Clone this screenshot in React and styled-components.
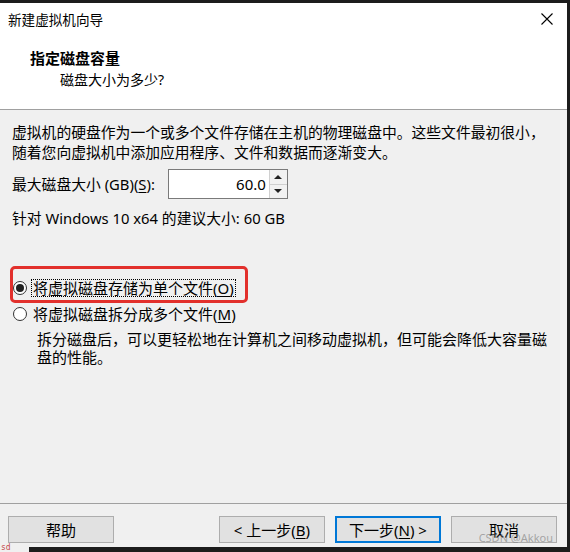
import React from 'react';
import styled, { createGlobalStyle } from 'styled-components';

const GlobalStyle = createGlobalStyle`
  html, body {
    margin: 0;
    padding: 0;
    background: #1c1c1c;
  }
`;

const Frame = styled.div`
  width: 570px;
  height: 552px;
  box-sizing: border-box;
  padding: 3px 3px 0 0;
  background: #1c1c1c;
  display: flex;
  flex-direction: column;
  font-family: "Noto Sans", "Noto Sans CJK SC", sans-serif;
  color: #000;
`;

const Window = styled.div`
  flex: 1;
  position: relative;
  display: flex;
  flex-direction: column;
  background: #f0f0f0;
`;

const TitleBar = styled.div`
  height: 32px;
  background: #fff;
  display: flex;
  align-items: center;
  justify-content: space-between;
  padding: 0 14px 0 8px;
  font-size: 13.6px;
`;

const Header = styled.div`
  height: 75px;
  box-sizing: border-box;
  background: #fff;
  border-bottom: 1px solid #a0a0a0;
  padding: 13px 0 0 30px;
`;

const HeaderTitle = styled.div`
  font-size: 15px;
  font-weight: bold;
  line-height: 20px;
`;

const HeaderSub = styled.div`
  font-size: 14px;
  line-height: 20px;
  margin-top: 2px;
  padding-left: 30px;
`;

const Body = styled.div`
  flex: 1;
  padding: 12px 12px 0 12px;
  font-size: 14.8px;
  line-height: 20px;
`;

const Text = styled.p`
  margin: ${p => p.$top || 0}px 0 0 0;
`;

const Key = styled.span`
  text-decoration: underline;
  text-underline-offset: 2px;
`;

const SizeRow = styled.div`
  display: flex;
  align-items: center;
  gap: 13px;
  margin-top: 7px;
`;

const SpinBox = styled.div`
  width: 120px;
  height: 30px;
  box-sizing: border-box;
  border: 1px solid #7a7a7a;
  background: #fff;
  display: flex;
`;

const SpinValue = styled.div`
  flex: 1;
  text-align: right;
  padding-right: 3px;
  line-height: 28px;
  font-size: 15px;
`;

const SpinButtons = styled.div`
  width: 17px;
  display: flex;
  flex-direction: column;
  border-left: 1px solid #d0d0d0;
`;

const SpinButton = styled.div`
  flex: 1;
  display: flex;
  align-items: center;
  justify-content: center;
  background: #f2f2f2;
  border-top: ${p => (p.$down ? '1px solid #d0d0d0' : 'none')};
`;

const Arrow = styled.span`
  width: 0;
  height: 0;
  border-left: 4px solid transparent;
  border-right: 4px solid transparent;
  ${p => (p.$down ? 'border-top: 4px solid #222;' : 'border-bottom: 4px solid #222;')}
`;

const Options = styled.div`
  display: flex;
  flex-direction: column;
  gap: 6px;
  margin-top: 50px;
`;

const OptionRow = styled.div`
  position: relative;
  display: flex;
  align-items: center;
  gap: 4px;
  height: 20px;
`;

const Radio = styled.span`
  width: 14px;
  height: 14px;
  box-sizing: border-box;
  margin-left: 1px;
  border-radius: 50%;
  border: 1px solid #333;
  background: #fff;
  display: flex;
  align-items: center;
  justify-content: center;

  &::after {
    content: '';
    width: 8px;
    height: 8px;
    border-radius: 50%;
    background: ${p => (p.$checked ? '#222' : 'transparent')};
  }
`;

const OptionLabel = styled.span`
  padding: 0 1px;
  line-height: 16px;
  font-size: 15px;
  border: 1px dotted ${p => (p.$focus ? '#000' : 'transparent')};
`;

const Highlight = styled.div`
  position: absolute;
  left: -2px;
  top: -12px;
  width: 238px;
  height: 37px;
  box-sizing: border-box;
  border: 3px solid #e2302c;
  border-radius: 5px;
  pointer-events: none;
`;

const Description = styled.div`
  padding-left: 25px;
  margin-top: 6px;
  font-size: 15px;
  line-height: 18px;
`;

const Separator = styled.div`
  height: 1px;
  background: #a0a0a0;
`;

const ButtonRow = styled.div`
  height: 43px;
  box-sizing: border-box;
  display: flex;
  align-items: flex-start;
  gap: 10px;
  padding: 12px 10px 0 8px;
`;

const Spacer = styled.div`
  flex: 1;
`;

const Button = styled.div`
  width: 106px;
  height: 27px;
  box-sizing: border-box;
  border: ${p => (p.$primary ? '2px solid #0078d7' : '1px solid #adadad')};
  background: #e1e1e1;
  display: flex;
  align-items: center;
  justify-content: center;
  font-size: 15px;
`;

const Watermark = styled.div`
  position: absolute;
  right: 14px;
  bottom: 2px;
  font-size: 11px;
  color: rgba(110, 110, 110, 0.55);
  pointer-events: none;
`;

const BottomStrip = styled.div`
  height: 5px;
  position: relative;
  background: #1c1c1c;
`;

const Tag = styled.span`
  position: absolute;
  left: 0;
  bottom: 0;
  width: 28px;
  height: 9px;
  background: #f0f0f0;
  color: #c44a4a;
  font-family: "DejaVu Sans Mono", monospace;
  font-size: 8px;
  line-height: 9px;
  padding-left: 1px;
`;

function CloseIcon() {
  return (
    <svg width="12" height="12" viewBox="0 0 12 12">
      <path d="M0.5 0.5 L11.5 11.5 M11.5 0.5 L0.5 11.5" stroke="#000" strokeWidth="1.1" fill="none" />
    </svg>
  );
}

export default function App() {
  return (
    <Frame>
      <GlobalStyle />
      <Window>
        <TitleBar>
          <span>新建虚拟机向导</span>
          <CloseIcon />
        </TitleBar>
        <Header>
          <HeaderTitle>指定磁盘容量</HeaderTitle>
          <HeaderSub>磁盘大小为多少?</HeaderSub>
        </Header>
        <Body>
          <Text>虚拟机的硬盘作为一个或多个文件存储在主机的物理磁盘中。这些文件最初很小，</Text>
          <Text>随着您向虚拟机中添加应用程序、文件和数据而逐渐变大。</Text>
          <SizeRow>
            <span>最大磁盘大小 (GB)(<Key>S</Key>):</span>
            <SpinBox>
              <SpinValue>60.0</SpinValue>
              <SpinButtons>
                <SpinButton><Arrow /></SpinButton>
                <SpinButton $down><Arrow $down /></SpinButton>
              </SpinButtons>
            </SpinBox>
          </SizeRow>
          <Text $top={9}>针对 Windows 10 x64 的建议大小: 60 GB</Text>
          <Options>
            <OptionRow>
              <Radio $checked />
              <OptionLabel $focus>将虚拟磁盘存储为单个文件(<Key>O</Key>)</OptionLabel>
              <Highlight />
            </OptionRow>
            <OptionRow>
              <Radio />
              <OptionLabel>将虚拟磁盘拆分成多个文件(<Key>M</Key>)</OptionLabel>
            </OptionRow>
          </Options>
          <Description>
            拆分磁盘后，可以更轻松地在计算机之间移动虚拟机，但可能会降低大容量磁<br />
            盘的性能。
          </Description>
        </Body>
        <Separator />
        <ButtonRow>
          <Button>帮助</Button>
          <Spacer />
          <Button>&lt; 上一步(<Key>B</Key>)</Button>
          <Button $primary>下一步(<Key>N</Key>) &gt;</Button>
          <Button>取消</Button>
        </ButtonRow>
        <Watermark>CSDN @Akkou</Watermark>
      </Window>
      <BottomStrip>
        <Tag>sd</Tag>
      </BottomStrip>
    </Frame>
  );
}
